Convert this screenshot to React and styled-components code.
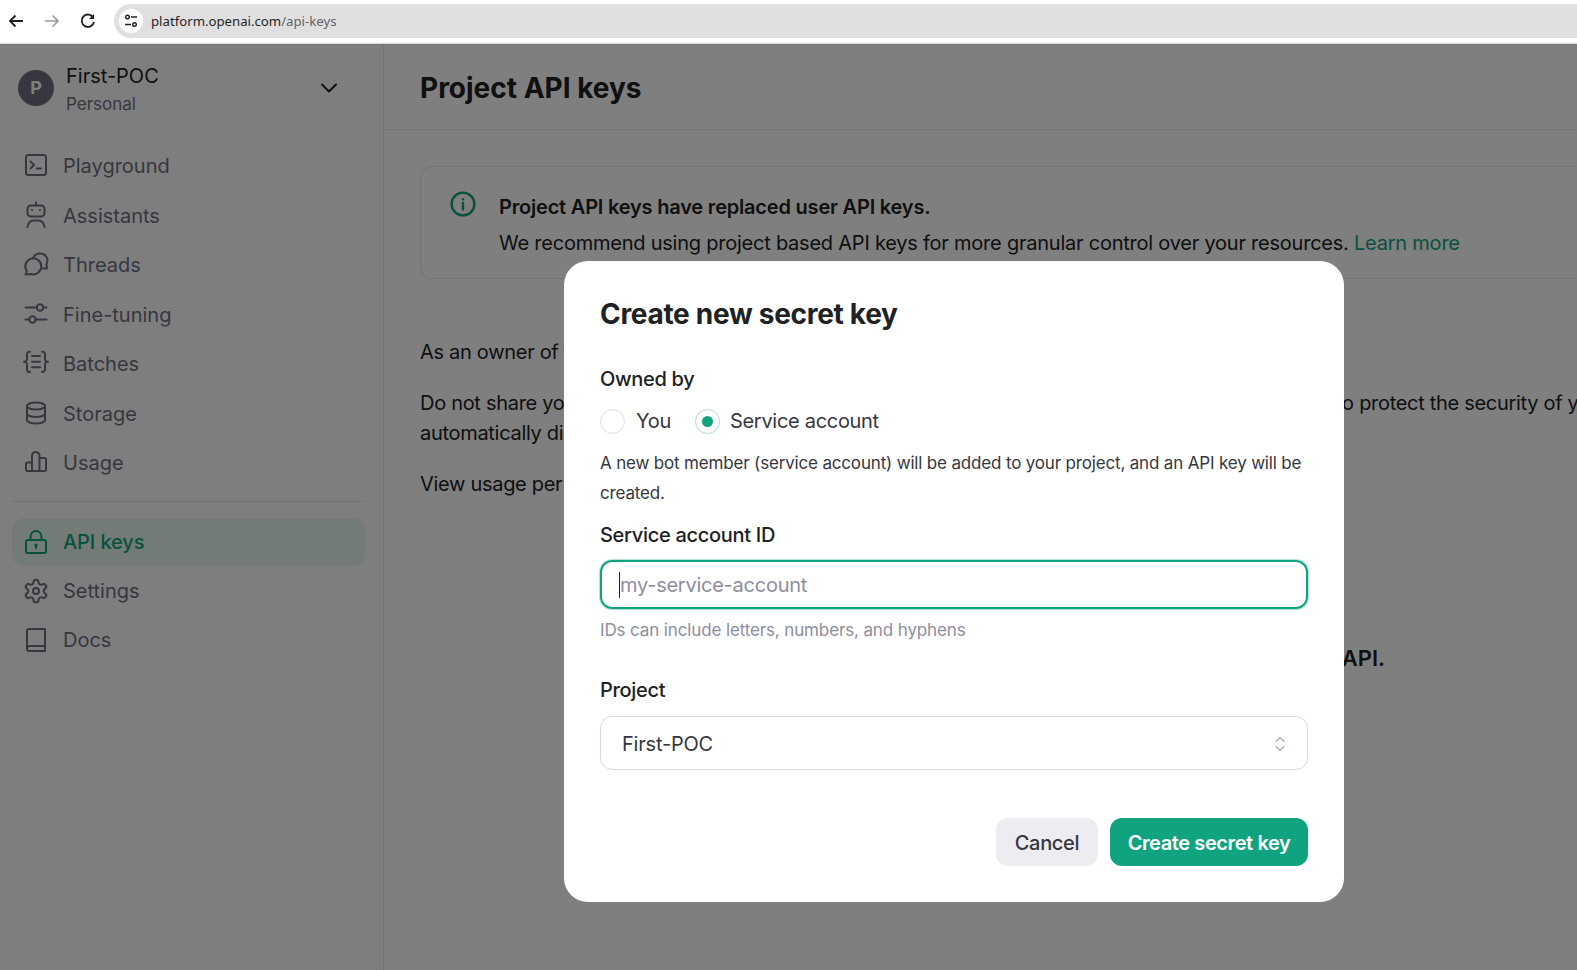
import React from "react";
import styled, { createGlobalStyle } from "styled-components";

const Global = createGlobalStyle`
  html, body { margin: 0; padding: 0; height: 100%; overflow: hidden; background: #fff; }
  body { font-family: Inter, "Noto Sans", sans-serif; color: #202123; letter-spacing: -0.2px; }
  * { box-sizing: border-box; }
`;

const Shell = styled.div`display: flex; flex-direction: column; width: 1577px; height: 970px; overflow: hidden;`;
const Toolbar = styled.header`display: flex; align-items: flex-start; height: 44px; flex: none; background: #fff; padding: 4px 0 0 6px; border-bottom: 1px solid #d8d8d8;`;
const NavBtn = styled.span`display: flex; width: 36px; height: 34px; align-items: center; justify-content: flex-start; padding-left: 1px; color: ${p => p.$off ? "#9a9a9a" : "#1f1f1f"};`;
const Omnibox = styled.div`display: flex; align-items: center; flex: 1; height: 34px; background: #e0e0e0; border-radius: 17px 0 0 17px; padding-left: 5px; gap: 8px; font-family: "Noto Sans", sans-serif; font-size: 13.2px; letter-spacing: 0; color: #1f1f1f;`;
const SiteBtn = styled.span`display: flex; align-items: center; justify-content: center; width: 24px; height: 24px; background: #fff; border-radius: 50%;`;
const Path = styled.span`color: #5f6368;`;

const Body = styled.div`position: relative; display: flex; flex: 1; min-height: 0; background: #fff;`;
const Overlay = styled.div`position: absolute; inset: 0; background: rgba(0,0,0,.5);`;

const Sidebar = styled.aside`display: flex; flex-direction: column; width: 384px; flex: none; padding: 0 18px 0 12px; border-right: 1px solid #e6e6ea; background: #fdfdfd; letter-spacing: 0;`;
const Org = styled.div`display: flex; align-items: center; height: 86px; padding: 1px 0 0 6px;`;
const Avatar = styled.div`display: flex; align-items: center; justify-content: center; width: 36px; height: 36px; border-radius: 50%; background: #6e6e80; color: #fff; font-size: 18px; font-weight: 700;`;
const OrgText = styled.div`display: flex; flex-direction: column; margin-left: 12px; padding-top: 4px; flex: 1;`;
const OrgName = styled.div`font-size: 20px; line-height: 28px; color: #202123;`;
const OrgSub = styled.div`font-size: 17px; line-height: 28px; color: #6e6e80;`;
const Chevron = styled.span`display: flex; margin-right: 24px; color: #202123;`;
const NavList = styled.nav`display: flex; flex-direction: column; gap: 1.45px; margin-top: ${p => p.$top || 0}px;`;
const NavItem = styled.a`display: flex; align-items: center; height: 48px; padding-left: 12px; gap: 15px; border-radius: 12px; font-size: 20px; color: ${p => p.$active ? "#10a37f" : "#6e6e80"}; background: ${p => p.$active ? "#e5f6ea" : "transparent"}; font-weight: ${p => p.$active ? 500 : 400}; letter-spacing: ${p => p.$active ? "-0.1px" : 0};`;
const NavIcon = styled.svg`width: 24px; height: 24px; flex: none; fill: none; overflow: visible; stroke: currentColor; stroke-width: 2; stroke-linecap: round; stroke-linejoin: round;`;
const Divider = styled.hr`width: 100%; margin: 14px 0 15.6px; border: 0; border-top: 1px solid #e6e6ea;`;

const Main = styled.main`flex: 1; min-width: 0;`;
const PageHead = styled.div`display: flex; align-items: center; height: 86px; padding: 2px 0 0 36px; border-bottom: 1px solid #e6e6ea;`;
const H1 = styled.h1`margin: 0; font-size: 28px; font-weight: 700; letter-spacing: 0; color: #202123;`;
const Content = styled.div`padding: 36px 0 0 36px; width: 1600px;`;
const Banner = styled.section`display: flex; gap: 23px; height: 113px; padding: 23px 29px; border: 1px solid #e6e6ea; border-radius: 12px; width: 1300px;`;
const InfoIcon = styled.svg`width: 26px; height: 26px; flex: none; margin-top: 1px; fill: none; stroke: #10a37f; stroke-width: 2.2; stroke-linecap: round;`;
const BannerTitle = styled.div`font-size: 20px; line-height: 36px; font-weight: 600; margin-top: -1px;`;
const BannerText = styled.div`font-size: 20px; line-height: 36px; letter-spacing: -0.23px; white-space: nowrap;`;
const GreenLink = styled.a`color: #10a37f;`;
const Para = styled.p`margin: ${p => p.$top || 21}px 0 0; font-size: 20px; line-height: 30px; letter-spacing: -0.3px; width: 1500px;`;
const EmptyHead = styled.div`width: 965px; margin-top: 144px; text-align: right; font-size: 22px; font-weight: 600; line-height: 30px; letter-spacing: 0;`;

const Modal = styled.div`position: absolute; left: 564px; top: 217px; width: 780px; height: 641px; padding: 36px; background: #fff; border-radius: 24px; color: #202123;`;
const Title = styled.h2`margin: 0 0 34px; font-size: 28px; line-height: 34px; font-weight: 700; letter-spacing: -0.3px;`;
const Label = styled.div`font-size: 20px; line-height: 28px; letter-spacing: -0.3px; font-weight: ${p => p.$w || 450};`;
const Radios = styled.div`display: flex; align-items: center; height: 30px; margin-top: 13px; font-size: 20px;`;
const Radio = styled.span`display: flex; align-items: center; justify-content: center; width: 25px; height: 25px; border-radius: 50%; border: 1px solid ${p => p.$on ? "#b5d8cf" : "#dedee6"}; margin-right: ${p => p.$on ? 10 : 11}px; &::after { content: ""; display: ${p => p.$on ? "block" : "none"}; width: 11px; height: 11px; border-radius: 50%; background: #10a37f; }`;
const RadioText = styled.span`margin-right: 24px; letter-spacing: -0.3px; color: #353740;`;
const Desc = styled.p`margin: 12px 0 0; font-size: 17px; line-height: 30px; letter-spacing: -0.17px; color: #353740;`;
const FieldLabel = styled(Label)`margin-top: 13px;`;
const Input = styled.div`position: relative; display: flex; align-items: center; height: 49px; margin-top: 11px; padding: 1px 0 0 18px; border: 2px solid #10a37f; box-shadow: 0 0 0 1px rgba(16,163,127,.3); border-radius: 12px; font-size: 20px; letter-spacing: -0.25px; color: #8e8ea0; &::before { content: ""; position: absolute; left: 17px; top: 10px; width: 1px; height: 26px; background: #202123; }`;
const Hint = styled.div`margin-top: 8px; font-size: 17px; line-height: 26px; letter-spacing: -0.13px; color: #8e8ea0;`;
const ProjectLabel = styled(Label)`margin-top: 33px;`;
const Select = styled.div`display: flex; align-items: center; justify-content: space-between; height: 54px; margin-top: 12px; padding: 2px 20px 0 21px; border: 1px solid #d9d9e3; border-radius: 12px; font-size: 20px; color: #353740;`;
const Actions = styled.div`display: flex; justify-content: flex-end; gap: 12px; margin-top: 48px;`;
const Button = styled.button`height: 48px; width: ${p => p.$primary ? 198 : 102}px; padding: 1px 0 0; border: 0; border-radius: 12px; font: ${p => p.$primary ? 600 : 500} 20px Inter, sans-serif; letter-spacing: ${p => p.$primary ? "-0.4px" : "-0.3px"}; background: ${p => p.$primary ? "#10a37f" : "#ececf1"}; color: ${p => p.$primary ? "#fff" : "#353740"};`;

const gear = "M12.22 2h-.44a2 2 0 0 0-2 2v.18a2 2 0 0 1-1 1.73l-.43.25a2 2 0 0 1-2 0l-.15-.08a2 2 0 0 0-2.73.73l-.22.38a2 2 0 0 0 .73 2.73l.15.1a2 2 0 0 1 1 1.72v.51a2 2 0 0 1-1 1.74l-.15.09a2 2 0 0 0-.73 2.73l.22.38a2 2 0 0 0 2.73.73l.15-.08a2 2 0 0 1 2 0l.43.25a2 2 0 0 1 1 1.73V20a2 2 0 0 0 2 2h.44a2 2 0 0 0 2-2v-.18a2 2 0 0 1 1-1.73l.43-.25a2 2 0 0 1 2 0l.15.08a2 2 0 0 0 2.73-.73l.22-.39a2 2 0 0 0-.73-2.73l-.15-.08a2 2 0 0 1-1-1.74v-.5a2 2 0 0 1 1-1.74l.15-.09a2 2 0 0 0 .73-2.73l-.22-.38a2 2 0 0 0-2.73-.73l-.15.08a2 2 0 0 1-2 0l-.43-.25a2 2 0 0 1-1-1.73V4a2 2 0 0 0-2-2z";

const Icons = {
  Playground: <><rect x="2" y="1" width="20" height="20" rx="2.5" /><path d="M6.5 7.5 10 11l-3.5 3.5M12.5 14.500H17" /></>,
  Assistants: <><rect x="3.5" y="1.5" width="17" height="11" rx="3.5" /><path d="M12 1.500V-1.500" /><path d="M3.5 23c0-3 2.5-6.5 6-6.5h5c3.500 0 6 3.500 6 6.500" /><circle cx="8" cy="6" r="1.1" fill="currentColor" stroke="none" /><circle cx="16" cy="6" r="1.1" fill="currentColor" stroke="none" /></>,
  Threads: <><path d="M1.5 21.5 2.8 18A8 8 0 1 1 7 21z" /><path d="M9 5.5A7.5 7.5 0 0 1 23.5 7c0 2.5-1 3-1 5l.5 3.5h-4" /></>,
  "Fine-tuning": <><path d="M1.5 4.5H12.8M19.2 4.5H22.5M1.5 16.5H5.3M11.7 16.5H22.5" /><circle cx="16" cy="4.5" r="3.2" /><circle cx="8.5" cy="16.5" r="3.2" /></>,
  Batches: <><path d="M6-.3h-.5A2.5 2.5 0 0 0 3 2.200V7A2.7 2.7 0 0 1 0 9.700 2.700 2.700 0 0 1 3 12.400v5.100A2.500 2.500 0 0 0 5.500 20H6" /><path d="M18-.3h.5A2.5 2.5 0 0 1 21 2.200V7a2.700 2.700 0 0 0 3 2.700A2.700 2.700 0 0 0 21 12.400v5.100a2.500 2.500 0 0 1-2.500 2.500H18" /><path d="M8 4h8M8 9.7h8M8 15.3h8" /></>,
  Storage: <><ellipse cx="12" cy="4" rx="9" ry="3.5" /><path d="M3 4v14c0 2 4 3.5 9 3.5s9-1.5 9-3.5V4" /><path d="M3 11.5c0 2 4 3.5 9 3.5s9-1.5 9-3.5" /></>,
  Usage: <><path d="M2 13a1.5 1.5 0 0 1 1.5-1.5H8V20H3.5A1.5 1.5 0 0 1 2 18.5z" /><path d="M8 20V4.7a3.7 3.7 0 0 1 7.5 0V20z" /><path d="M15.5 7h5A1.5 1.5 0 0 1 22 8.5v10a1.5 1.5 0 0 1-1.5 1.5h-5" /></>,
  "API keys": <><rect x="2" y="10" width="20" height="13" rx="2" /><path d="M6.5 10V6.5a5.5 5.5 0 0 1 11 0V10" /><circle cx="12" cy="15" r="1.6" fill="currentColor" stroke="none" /><path d="M12 15v3" /></>,
  Settings: <><g transform="translate(12 12) scale(1.13) translate(-12 -12)"><path d={gear} strokeWidth="1.8" /></g><circle cx="12" cy="12" r="3" /></>,
  Docs: <><path d="M3 20.5V3a2 2 0 0 1 2-2h16v22H5.5A2.5 2.5 0 0 1 3 20.5z" /><path d="M3 20.5A2.5 2.5 0 0 1 5.5 18H21" /></>,
};

const top = ["Playground", "Assistants", "Threads", "Fine-tuning", "Batches", "Storage", "Usage"];
const bottom = ["API keys", "Settings", "Docs"];

const Item = ({ name }) => (
  <NavItem $active={name === "API keys"}>
    <NavIcon viewBox="0 0 24 24">{Icons[name]}</NavIcon>
    {name}
  </NavItem>
);

export default function App() {
  return (
    <Shell>
      <Global />
      <Toolbar>
        <NavBtn><svg width="18" height="18" viewBox="0 0 18 18" fill="none" stroke="currentColor" strokeWidth="1.8"><path d="M16 9H3M8.5 3.5 3 9l5.5 5.5" /></svg></NavBtn>
        <NavBtn $off><svg width="18" height="18" viewBox="0 0 18 18" fill="none" stroke="currentColor" strokeWidth="1.6"><path d="M2 9h13M9.5 3.5 15 9l-5.5 5.5" /></svg></NavBtn>
        <NavBtn><svg width="18" height="18" viewBox="0 0 18 18" fill="none" stroke="currentColor" strokeWidth="1.8"><path d="M14.5 6A6.2 6.2 0 1 0 15 10" /><path d="M15 2v5h-5" fill="currentColor" stroke="none" /></svg></NavBtn>
        <Omnibox>
          <SiteBtn><svg width="14" height="14" viewBox="0 0 14 14" fill="none" stroke="#1f1f1f" strokeWidth="1.4"><circle cx="3.5" cy="3" r="1.8" /><path d="M7 3h6M1 10.5h6" /><circle cx="10.5" cy="10.5" r="1.8" /></svg></SiteBtn>
          <span>platform.openai.com<Path>/api-keys</Path></span>
        </Omnibox>
      </Toolbar>
      <Body>
        <Sidebar>
          <Org>
            <Avatar>P</Avatar>
            <OrgText>
              <OrgName>First-POC</OrgName>
              <OrgSub>Personal</OrgSub>
            </OrgText>
            <Chevron><svg width="24" height="24" viewBox="0 0 24 24" fill="none" stroke="currentColor" strokeWidth="2" strokeLinecap="round" strokeLinejoin="round"><path d="M5 8.5l7 7 7-7" /></svg></Chevron>
          </Org>
          <NavList $top={12.4}>{top.map(n => <Item key={n} name={n} />)}</NavList>
          <Divider />
          <NavList>{bottom.map(n => <Item key={n} name={n} />)}</NavList>
        </Sidebar>
        <Main>
          <PageHead><H1>Project API keys</H1></PageHead>
          <Content>
            <Banner>
              <InfoIcon viewBox="0 0 24 24"><circle cx="12" cy="12" r="10.5" /><path d="M12 11v6M12 7.5v.2" /></InfoIcon>
              <div>
                <BannerTitle>Project API keys have replaced user API keys.</BannerTitle>
                <BannerText>We recommend using project based API keys for more granular control over your resources. <GreenLink>Learn more</GreenLink></BannerText>
              </div>
            </Banner>
            <Para $top={58}>As an owner of this project, you can view and manage all API keys in this project.</Para>
            <Para>Do not share your API key with others, or expose it in the browser or other client-side code. In order to protect the security of your account, OpenAI may also automatically disable any API key that has leaked publicly.</Para>
            <Para>View usage per API key on the Usage page.</Para>
            <EmptyHead>Create an API key to access the OpenAI API.</EmptyHead>
          </Content>
        </Main>
        <Overlay />
        <Modal>
          <Title>Create new secret key</Title>
          <Label>Owned by</Label>
          <Radios>
            <Radio /><RadioText>You</RadioText>
            <Radio $on /><RadioText>Service account</RadioText>
          </Radios>
          <Desc>A new bot member (service account) will be added to your project, and an API key will be created.</Desc>
          <FieldLabel $w={500}>Service account ID</FieldLabel>
          <Input>my-service-account</Input>
          <Hint>IDs can include letters, numbers, and hyphens</Hint>
          <ProjectLabel>Project</ProjectLabel>
          <Select>
            First-POC
            <svg width="14" height="18" viewBox="0 0 14 18" fill="none" stroke="#b4b4c4" strokeWidth="1.6" strokeLinecap="round" strokeLinejoin="round"><path d="M3 6.5 7 2.5l4 4M3 11.5l4 4 4-4" /></svg>
          </Select>
          <Actions>
            <Button>Cancel</Button>
            <Button $primary>Create secret key</Button>
          </Actions>
        </Modal>
      </Body>
    </Shell>
  );
}
